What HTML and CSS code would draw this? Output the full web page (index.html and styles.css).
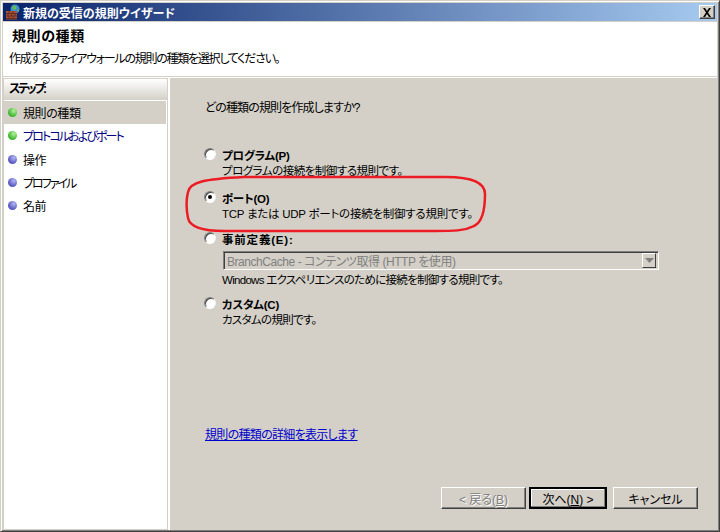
FILE: index.html
```html
<!DOCTYPE html>
<html lang="ja">
<head>
<meta charset="utf-8">
<title>新規の受信の規則ウイザード</title>
<link rel="stylesheet" href="styles.css">
</head>
<body>
<div class="window">
  <div class="titlebar">
    <svg class="app-icon" width="16" height="16" viewBox="0 0 16 16">
      <circle cx="10" cy="5" r="4.500" fill="#3f8fd0"/>
      <path d="M7.500 2c2-1 4 0 4 2s-3 2-4 1zM12.500 6l2-1-1 3z" fill="#5fbf4f"/>
      <rect x="1" y="7" width="11" height="8.500" fill="#a5523a"/>
      <path d="M1 9.500h11M1 12h11M1 14.500h11M4 7v2.500M8 7v2.500M3 9.500V12M6.500 9.500V12M10 9.500V12M4 12v2.500M8 12v2.500" stroke="#6b2d1e" stroke-width="1" fill="none"/>
    </svg>
    <span class="title-text">新規の受信の規則ウイザード</span>
    <button class="close" type="button" aria-label="閉じる">
      <svg width="10" height="9" viewBox="0 0 10 9"><path d="M1 0h2l2 3 2-3h2L6 4.500 9 9H7L5 6 3 9H1l3-4.500z" fill="#000"/></svg>
    </button>
  </div>
  <header class="header">
    <h1 class="header-title">規則の種類</h1>
    <p class="header-sub">作成するファイアウォールの規則の種類を選択してください。</p>
  </header>
  <div class="body">
    <nav class="steps">
      <div class="steps-head">ステップ:</div>
      <ul class="step-list">
        <li class="step step-current"><i class="dot dot-green"></i>規則の種類</li>
        <li class="step step-next"><i class="dot dot-green"></i>プロトコルおよびポート</li>
        <li class="step"><i class="dot dot-blue"></i>操作</li>
        <li class="step step-profile"><i class="dot dot-blue"></i>プロファイル</li>
        <li class="step"><i class="dot dot-blue"></i>名前</li>
      </ul>
    </nav>
    <main class="content">
      <p class="question">どの種類の規則を作成しますか?</p>
      <div class="options">
        <div class="option opt-program">
          <i class="radio"></i>
          <div class="option-text">
            <div class="option-label">プログラム(P)</div>
            <div class="option-desc">プログラムの接続を制御する規則です。</div>
          </div>
        </div>
        <div class="option opt-port">
          <i class="radio radio-on"></i>
          <div class="option-text">
            <div class="option-label">ポート(O)</div>
            <div class="option-desc">TCP または UDP ポートの接続を制御する規則です。</div>
          </div>
        </div>
        <div class="option opt-predefined">
          <i class="radio"></i>
          <div class="option-text">
            <div class="option-label">事前定義(E):</div>
            <div class="combo">
              <span class="combo-value">BranchCache - コンテンツ取得 (HTTP を使用)</span>
              <span class="combo-btn"><svg width="9" height="5" viewBox="0 0 9 5"><path d="M0 0h9L4.500 5z" fill="#808080"/></svg></span>
            </div>
            <div class="option-desc">Windows エクスペリエンスのために接続を制御する規則です。</div>
          </div>
        </div>
        <div class="option opt-custom">
          <i class="radio"></i>
          <div class="option-text">
            <div class="option-label">カスタム(C)</div>
            <div class="option-desc">カスタムの規則です。</div>
          </div>
        </div>
      </div>
      <a class="more" href="#">規則の種類の詳細を表示します</a>
      <div class="buttons">
        <button class="btn btn-back" type="button" disabled>&lt; 戻る(<u>B</u>)</button>
        <button class="btn btn-next" type="button">次へ(<u>N</u>) &gt;</button>
        <button class="btn btn-cancel" type="button">キャンセル</button>
      </div>
      <svg class="ring" width="304" height="60" viewBox="0 0 304 60">
        <path d="M60 3H262C285 3 301 8 301 20C301 34 299 48 290 52C280 57 270 57 250 57H40C20 57 6 54 4 44C2 34 2 26 4 18C6 8 20 5 60 3Z" fill="none" stroke="#ed1c24" stroke-width="2.500"/>
      </svg>
    </main>
  </div>
</div>
</body>
</html>
```
FILE: styles.css
```css
* { box-sizing: border-box; }
html, body { margin: 0; padding: 0; }
body {
  width: 720px;
  height: 532px;
  overflow: hidden;
  font-family: "Liberation Sans", "Noto Sans CJK JP", sans-serif;
  font-size: 11.5px;
  font-feature-settings: "palt";
  color: #000;
  background: #d4d0c8;
}
.window {
  width: 720px;
  height: 532px;
  display: flex;
  flex-direction: column;
  background: #d4d0c8;
  border-style: solid;
  border-width: 1px;
  border-color: #d4d0c8 #404040 #404040 #d4d0c8;
  box-shadow: inset 1px 1px 0 #fff, inset -1px -1px 0 #808080;
  padding: 2px 2px 1px 2px;
}
.titlebar {
  height: 18px;
  display: flex;
  align-items: center;
  flex: none;
  background: linear-gradient(90deg, #0a246a, #a6caf0);
  padding: 0 2px 0 2px;
  margin: 0 0 1px 0;
}
.app-icon { flex: none; margin-right: 2px; }
.title-text {
  color: #fff;
  font-weight: 700;
  font-size: 12px;
  flex: 1;
}
.close {
  width: 16px;
  height: 14px;
  padding: 0;
  display: flex;
  align-items: center;
  justify-content: center;
  background: #d4d0c8;
  border: 1px solid;
  border-color: #fff #404040 #404040 #fff;
  box-shadow: inset -1px -1px 0 #808080;
}
.header {
  height: 55px;
  flex: none;
  background: #fff;
  padding: 4px 0 0 9px;
  border-bottom: 1px solid #d4d0c8;
}
.header-title {
  margin: 0;
  font-size: 14px;
  line-height: 20px;
  letter-spacing: 0.6px;
  font-weight: 700;
}
.header-sub {
  margin: 5px 0 0 -3px;
  font-size: 12px;
  line-height: 17px;
  letter-spacing: -1.25px;
}
.body {
  flex: 1;
  display: flex;
  background: #fff;
  padding-top: 1px;
  min-height: 0;
}
.steps {
  width: 165px;
  flex: none;
  background: #fff;
  border: 1px solid #d4d0c8;
}
.steps-head {
  height: 21px;
  padding-left: 5px;
  line-height: 21px;
  font-weight: 700;
  font-size: 12px;
  letter-spacing: -2.400px;
  background: linear-gradient(180deg, #fff, #d4d0c8);
  margin-bottom: 1px;
}
.step-list { list-style: none; margin: 0; padding: 0; }
.step {
  height: 23.300px;
  display: flex;
  align-items: center;
  padding-left: 4px;
  font-size: 12px;
  margin-right: 1px;
  letter-spacing: -0.4px;
}
.step-current { background: #d4d0c8; }
.step-next { color: #000080; letter-spacing: -1.900px; }
.step-profile { letter-spacing: -2px; }
.dot {
  width: 9px;
  height: 9px;
  border-radius: 50%;
  margin-right: 6px;
  flex: none;
}
.dot-green { background: radial-gradient(circle at 65% 30%, #b8f0a0, #46bb36 60%, #2f9a25); }
.dot-blue { background: radial-gradient(circle at 65% 30%, #b4b6f0, #5f61c6 60%, #4446a8); }
.content {
  flex: 1;
  position: relative;
  margin-left: 2px;
  background: #d4d0c8;
  display: flex;
  flex-direction: column;
  padding: 22px 0 0 35px;
}
.question { margin: 0; font-size: 12px; line-height: 17px; letter-spacing: -0.87px; }
.options { margin-top: 31px; }
.option { display: flex; align-items: flex-start; }
.radio {
  width: 12px;
  height: 12px;
  border-radius: 50%;
  flex: none;
  margin: 0 6px 0 -1px;
  background: #fff;
  border: 1px solid;
  border-color: #808080 #f4f3ef #fff #808080;
  box-shadow: inset 1px 1px 0 #404040;
  position: relative;
}
.radio-on::after {
  content: "";
  position: absolute;
  left: 3px;
  top: 3px;
  width: 4px;
  height: 4px;
  border-radius: 50%;
  background: #000;
}
.option-text { flex: 1; }
.option-label { font-weight: 700; font-size: 11.5px; line-height: 16px; letter-spacing: -0.2px; }
.option-desc { font-size: 11.5px; line-height: 15px; letter-spacing: -0.5px; }
.opt-port { margin-top: 12px; }
.opt-port .option-desc { letter-spacing: -0.25px; }
.opt-predefined { margin-top: 10px; }
.opt-predefined .option-label { letter-spacing: 0.8px; }
.opt-predefined .option-desc { letter-spacing: -0.7px; }
.opt-custom { margin-top: 9px; }
.opt-custom .option-desc { letter-spacing: -0.7px; }
.combo {
  width: 436px;
  height: 19px;
  display: flex;
  align-items: center;
  margin: 3px 0 3px 1px;
  border: 1px solid;
  border-color: #808080 #fff #fff #808080;
  box-shadow: inset 1px 1px 0 #404040, inset -1px -1px 0 #d4d0c8;
  padding: 0 2px 0 3px;
  color: #808080;
}
.combo-value { flex: 1; font-size: 12px; white-space: nowrap; letter-spacing: -0.45px; }
.combo-btn {
  width: 14px;
  height: 15px;
  display: flex;
  align-items: center;
  justify-content: center;
  background: #d4d0c8;
  border: 1px solid;
  border-color: #fff #404040 #404040 #fff;
}
.more {
  margin-top: 99px;
  color: #0000cc;
  font-size: 12px;
  line-height: 17px;
  letter-spacing: -0.7px;
  align-self: flex-start;
}
.buttons {
  display: flex;
  margin-top: 43px;
  margin-left: 236px;
}
.btn {
  height: 22px;
  padding: 0;
  font: inherit;
  font-size: 12px;
  background: #d4d0c8;
  border: 1px solid;
  border-color: #fff #404040 #404040 #fff;
  box-shadow: inset -1px -1px 0 #808080;
  color: #000;
}
.btn-back { width: 85px; color: #808080; text-shadow: 1px 1px 0 #fff; }
.btn-next { width: 78px; margin-left: 3px; border: 2px solid #000; box-shadow: inset -1px -1px 0 #808080, inset 1px 1px 0 #fff; }
.btn-cancel { width: 85px; margin-left: 6px; }
.ring { position: absolute; left: 14px; top: 96px; pointer-events: none; }
```
